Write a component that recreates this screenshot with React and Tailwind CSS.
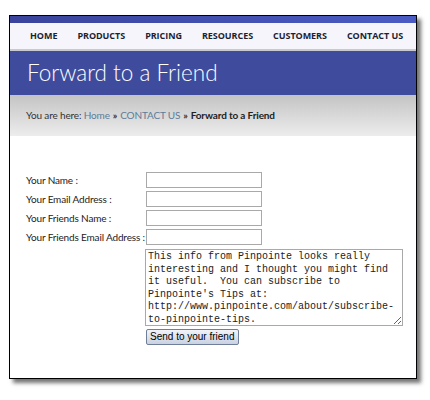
import React from 'react';

const navItems = ['HOME', 'PRODUCTS', 'PRICING', 'RESOURCES', 'CUSTOMERS', 'CONTACT US'];

const fields = ['Your Name :', 'Your Email Address :', 'Your Friends Name :', 'Your Friends Email Address :'];

const message =
  "This info from Pinpointe looks really interesting and I thought you might find it useful.  You can subscribe to Pinpointe's Tips at: http://www.pinpointe.com/about/subscribe-to-pinpointe-tips.";

export default function App() {
  return (
    <div className="w-[430px] h-[400px] bg-white pt-[15px] pl-[9px]">
      <div className="w-[408px] h-[364px] border border-black bg-white shadow-[4px_4px_4px_rgba(0,0,0,0.55)] overflow-hidden">
        {/* top strip */}
        <div className="h-[7px] bg-gradient-to-r from-[#3a449c] to-[#4a5cc4]" />

        {/* nav */}
        <nav className="h-[26px] bg-[#f6f5fc] flex items-center gap-[20px] pl-[20px] font-['Open_Sans',sans-serif] text-[9px] font-bold text-[#1c1f33] tracking-[-0.05px]">
          {navItems.map((item) => (
            <span key={item}>{item}</span>
          ))}
        </nav>
        <div className="h-[2px] bg-[#c9c9d2]" />

        {/* banner */}
        <div className="h-[44px] bg-[#3f4c9e] flex items-center pl-[17px]">
          <h1 className="font-['Lato',sans-serif] font-light text-[22.5px] text-white">Forward to a Friend</h1>
        </div>

        {/* breadcrumb */}
        <div className="h-[41px] bg-gradient-to-b from-[#c4c4c4] to-[#ededed] flex items-center pl-[16px] font-['Lato',sans-serif] text-[10px] tracking-[-0.15px] text-[#333]">
          <span>You are here:&nbsp;</span>
          <span className="text-[#5b7d99]">Home</span>
          <span className="mx-[3px] font-bold">»</span>
          <span className="text-[#5b7d99]">CONTACT US</span>
          <span className="mx-[3px] font-bold">»</span>
          <span className="font-bold text-[#222]">Forward to a Friend</span>
        </div>

        {/* form */}
        <div className="pt-[36px] pl-[16px] font-['Lato',sans-serif] text-[10px] tracking-[-0.15px] text-[#222]">
          <div className="flex flex-col gap-[3px]">
            {fields.map((label) => (
              <div key={label} className="flex items-center h-[16px]">
                <label className="w-[120px] whitespace-nowrap">{label}</label>
                <input className="w-[116px] h-[16px] border border-[#a9a9a9] bg-white" />
              </div>
            ))}
          </div>
          <div className="ml-[119px] mt-[4px]">
            <textarea
              defaultValue={message}
              className="block w-[258px] h-[77px] border border-[#a9a9a9] px-[2px] py-[1px] font-['Liberation_Mono',monospace] text-[10px] leading-[12.6px] tracking-normal text-[#222] resize-y"
            />
            <button className="mt-[3px] ml-[1px] h-[16px] px-[3px] border border-[#6f7e99] rounded-[2px] bg-gradient-to-b from-[#f2f4f8] to-[#c9d2e2] font-['Liberation_Sans',sans-serif] text-[10px] leading-none tracking-normal text-black">
              Send to your friend
            </button>
          </div>
        </div>
      </div>
    </div>
  );
}
